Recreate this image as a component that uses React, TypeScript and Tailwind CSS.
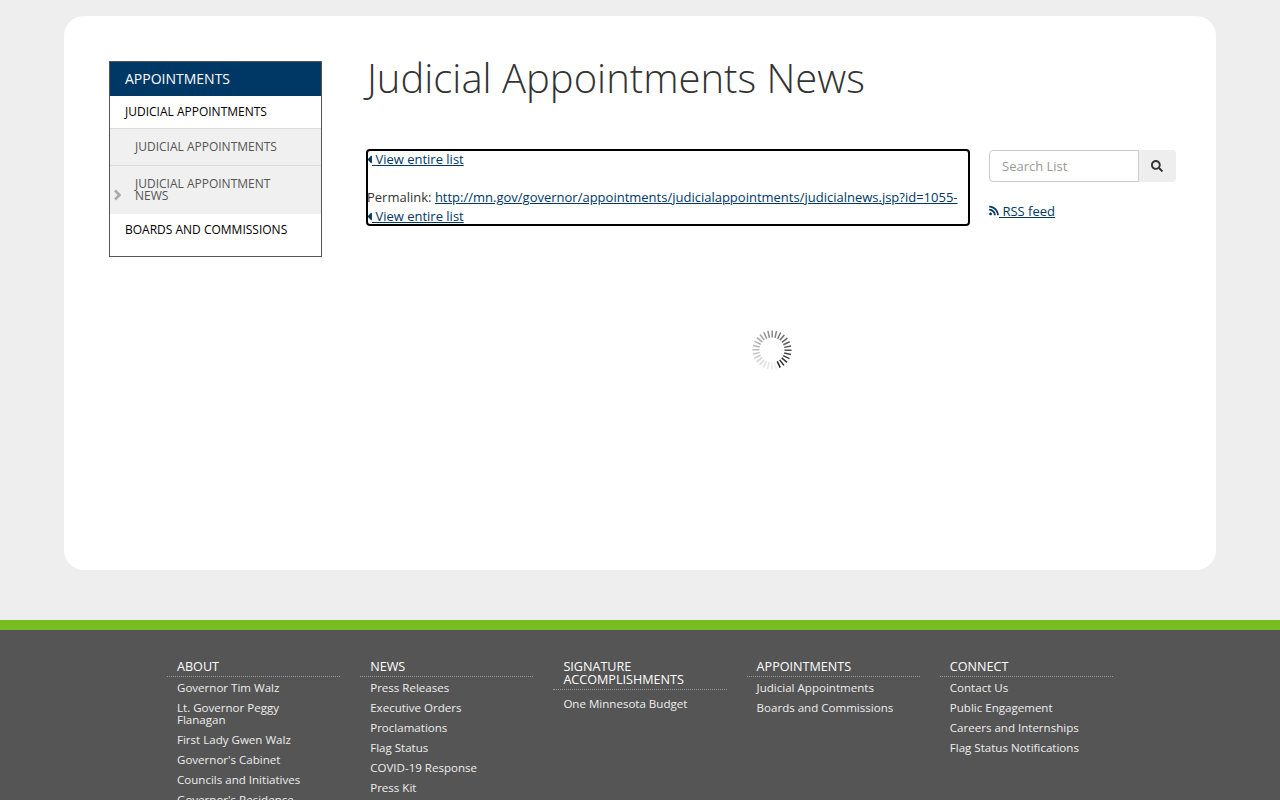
import { FaCaretLeft, FaRss, FaSearch } from "react-icons/fa";

type FooterColumn = {
  title: string[];
  links: string[];
};

const columns: FooterColumn[] = [
  {
    title: ["ABOUT"],
    links: [
      "Governor Tim Walz",
      "Lt. Governor Peggy Flanagan",
      "First Lady Gwen Walz",
      "Governor's Cabinet",
      "Councils and Initiatives",
      "Governor's Residence",
    ],
  },
  {
    title: ["NEWS"],
    links: [
      "Press Releases",
      "Executive Orders",
      "Proclamations",
      "Flag Status",
      "COVID-19 Response",
      "Press Kit",
    ],
  },
  {
    title: ["SIGNATURE", "ACCOMPLISHMENTS"],
    links: ["One Minnesota Budget"],
  },
  {
    title: ["APPOINTMENTS"],
    links: ["Judicial Appointments", "Boards and Commissions"],
  },
  {
    title: ["CONNECT"],
    links: [
      "Contact Us",
      "Public Engagement",
      "Careers and Internships",
      "Flag Status Notifications",
    ],
  },
];

const ticks = Array.from({ length: 28 }, (_, i) => i);

function Spinner() {
  return (
    <svg width="44" height="44" viewBox="0 0 44 44" className="block">
      {ticks.map((i) => (
        <line
          key={i}
          x1="22"
          y1="2.5"
          x2="22"
          y2="9.5"
          stroke="#222"
          strokeWidth="1.5"
          opacity={0.05 + 0.95 * Math.pow((i + 1) / 28, 1.2)}
          transform={`rotate(${155 + (360 / 28) * (i + 1)} 22 22)`}
        />
      ))}
    </svg>
  );
}

function BackLink() {
  return (
    <a className="text-[#003865] underline flex items-center h-[19px]">
      <FaCaretLeft className="w-[5px] h-[13px] shrink-0" />
      <span className="whitespace-pre"> View entire list</span>
    </a>
  );
}

export default function App() {
  return (
    <div className="h-[800px] overflow-hidden bg-[#eeeeee] font-['Open_Sans',sans-serif] text-[13px] text-[#333333]">
      {/* CARD */}
      <div className="mx-16 mt-4 h-[554px] rounded-[20px] bg-white pl-[45px] pt-[45px] flex">
        {/* SIDE NAV */}
        <div className="w-[213px] h-[196px] border border-[#555555] shrink-0 text-[12px] uppercase leading-3">
          <div className="h-[34px] bg-[#003865] text-white text-[14px] pl-[15px] flex items-center">
            Appointments
          </div>
          <div className="h-[33px] pl-[15px] flex items-center border-b border-[#dddddd] text-black">
            Judicial Appointments
          </div>
          <div className="h-[37px] pl-[25px] flex items-center border-b border-[#dddddd] bg-[#f0f0f0] text-[#555555]">
            Judicial Appointments
          </div>
          <div className="relative h-[48px] pl-[25px] pr-10 flex items-center bg-[#f0f0f0] text-[#555555]">
            Judicial Appointment News
            <svg
              width="9"
              height="12"
              viewBox="0 0 9 12"
              className="absolute left-[3px] top-[23px]"
            >
              <polyline
                points="2,1.5 6.5,6 2,10.5"
                fill="none"
                stroke="#aaaaaa"
                strokeWidth="2.6"
              />
            </svg>
          </div>
          <div className="h-[32px] pl-[15px] flex items-center text-black">
            Boards and Commissions
          </div>
        </div>

        {/* MAIN */}
        <div className="ml-[44px] w-[810px]">
          <h1 className="text-[40px] font-light leading-[34px] h-[88px] ml-[1px] text-[#333333]">
            Judicial Appointments News
          </h1>
          <div className="flex">
            <div className="w-[604px] h-[77px] border-2 border-black rounded-[4px] overflow-hidden leading-[19px]">
              <div className="-ml-[1px] -mt-[2px] pt-[1px]">
                <BackLink />
                <div className="h-[19px]" />
                <div className="whitespace-nowrap">
                  Permalink:{" "}
                  <a className="text-[#003865] underline">
                    http://mn.gov/governor/appointments/judicialappointments/judicialnews.jsp?id=1055-
                  </a>
                </div>
                <BackLink />
              </div>
            </div>
            <div className="ml-[19px] pt-[1px]">
              <div className="flex h-[32px] w-[187px]">
                <div className="w-[150px] border border-[#cccccc] rounded-l-[4px] pl-3 pt-[1px] flex items-center text-[#999999]">
                  Search List
                </div>
                <div className="w-[37px] bg-[#eeeeee] rounded-r-[4px] flex items-center justify-center pr-[1px]">
                  <FaSearch className="w-[12px] h-[12px] text-[#333333]" />
                </div>
              </div>
              <a className="mt-[20px] flex items-center text-[#003865] underline leading-[19px]">
                <FaRss className="w-[10px] h-[11px] shrink-0 -translate-y-[1px]" />
                <span className="whitespace-pre"> RSS feed</span>
              </a>
            </div>
          </div>
          <div className="mt-[102px] ml-[384px] w-[44px] h-[44px]">
            <Spinner />
          </div>
        </div>
      </div>

      {/* FOOTER */}
      <div className="mt-[50px] h-[180px] border-t-[10px] border-[#78be20] bg-[#555555] pl-[167px] pt-[30px]">
        <div className="grid grid-cols-5 gap-x-5 w-[946px]">
          {columns.map((col) => (
            <div key={col.title[0]}>
              <div className="pl-[10px] pb-[3px] border-b border-dotted border-[#999999] text-[12.6px] leading-[13px] text-white">
                {col.title.map((line) => (
                  <div key={line}>{line}</div>
                ))}
              </div>
              <ul
                className={
                  col.title.length > 1
                    ? "mt-[4px] pl-[10px] pr-[15px] text-[11.55px] leading-3 text-[#eeeeee]"
                    : "mt-[1px] pl-[10px] pr-[15px] text-[11.55px] leading-3 text-[#eeeeee]"
                }
              >
                {col.links.map((link) => (
                  <li key={link} className="py-1">
                    {link}
                  </li>
                ))}
              </ul>
            </div>
          ))}
        </div>
      </div>
    </div>
  );
}
